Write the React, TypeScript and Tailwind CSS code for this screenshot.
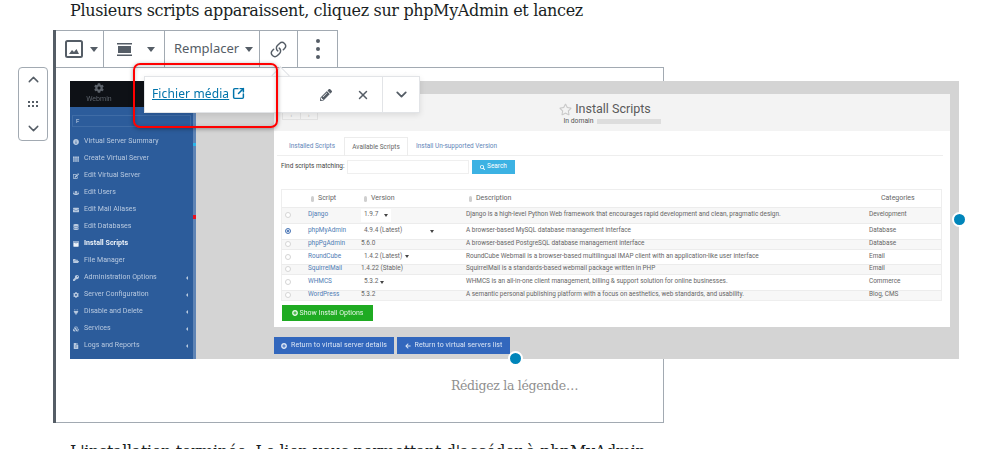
import { ChevronDown, ChevronUp, Link as LinkIcon, SquareArrowOutUpRight, X } from "lucide-react";
import {
  FaCog,
  FaDatabase,
  FaEdit,
  FaEnvelope,
  FaFileAlt,
  FaFolderOpen,
  FaInfoCircle,
  FaKey,
  FaPencilAlt,
  FaPlug,
  FaPlusCircle,
  FaRegStar,
  FaSearch,
  FaTh,
  FaUsers,
  FaArrowLeft,
  FaCubes,
  FaArchive,
} from "react-icons/fa";

const sidebarItems = [
  { label: "Virtual Server Summary", icon: FaInfoCircle },
  { label: "Create Virtual Server", icon: FaTh },
  { label: "Edit Virtual Server", icon: FaEdit },
  { label: "Edit Users", icon: FaUsers },
  { label: "Edit Mail Aliases", icon: FaEnvelope },
  { label: "Edit Databases", icon: FaDatabase },
  { label: "Install Scripts", icon: FaArchive, active: true },
  { label: "File Manager", icon: FaFolderOpen },
  { label: "Administration Options", icon: FaKey, more: true },
  { label: "Server Configuration", icon: FaCog, more: true },
  { label: "Disable and Delete", icon: FaPlug, more: true },
  { label: "Services", icon: FaCubes, more: true },
  { label: "Logs and Reports", icon: FaFileAlt, more: true },
];

const scripts = [
  { name: "Django", version: "1.9.7", selectW: "w-[30px]", desc: "Django is a high-level Python Web framework that encourages rapid development and clean, pragmatic design.", cat: "Development", h: "h-[16px]", odd: true },
  { name: "phpMyAdmin", version: "4.9.4 (Latest)", selectW: "w-[76px]", desc: "A browser-based MySQL database management interface", cat: "Database", h: "h-[16px]", checked: true },
  { name: "phpPgAdmin", version: "5.6.0", desc: "A browser-based PostgreSQL database management interface", cat: "Database", h: "h-[10px]", odd: true },
  { name: "RoundCube", version: "1.4.2 (Latest)", selectW: "w-[51px]", desc: "RoundCube Webmail is a browser-based multilingual IMAP client with an application-like user interface", cat: "Email", h: "h-[15px]" },
  { name: "SquirrelMail", version: "1.4.22 (Stable)", desc: "SquirrelMail is a standards-based webmail package written in PHP", cat: "Email", h: "h-[10px]", odd: true },
  { name: "WHMCS", version: "5.3.2", selectW: "w-[26px]", desc: "WHMCS is an all-in-one client management, billing & support solution for online businesses.", cat: "Commerce", h: "h-[16px]" },
  { name: "WordPress", version: "5.3.2", desc: "A semantic personal publishing platform with a focus on aesthetics, web standards, and usability.", cat: "Blog, CMS", h: "h-[10px]", odd: true },
];

function Caret() {
  return <span className="h-0 w-0 border-x-[4px] border-t-[5px] border-x-transparent border-t-[#555d66]" />;
}

function Handle({ className }: { className: string }) {
  return <span className={`absolute h-[15px] w-[15px] rounded-full border-2 border-white bg-[#0085ba] ${className}`} />;
}

function SortHead({ label, className }: { label: string; className: string }) {
  return (
    <div className={`flex items-center gap-[4px] ${className}`}>
      <span className="h-[6px] w-[3px] rounded-full bg-[#cfcfcf]" />
      <span>{label}</span>
    </div>
  );
}

function Sidebar() {
  return (
    <div className="relative flex w-[126px] shrink-0 flex-col border-r-[3px] border-[#5f84b5] bg-[#2c5c9b]">
      <div className="h-[26px] bg-[#0e1116]">
        <div className="flex w-[58px] flex-col items-center pt-[2px] text-[#5c626a]">
          <FaCog size={10} />
          <span className="mt-[3px] text-[7px] leading-none">Webmin</span>
        </div>
      </div>
      <div className="mx-[2px] mt-[8px] h-[12px] border border-[#3f6ca6] pl-[3px] text-[6px] leading-[10px] text-[#c9d6e8]">
        F
      </div>
      <div className="mt-[6px] flex flex-col">
        {sidebarItems.map((item) => {
          const Icon = item.icon;
          return (
            <div
              key={item.label}
              className={`flex h-[17px] items-center pl-[3px] pr-[5px] text-[7px] tracking-[0.05px] ${item.active ? "font-bold text-[#eef3f9]" : "text-[#b9cae0]"}`}
            >
              <Icon size={6} className="mr-[5px] w-[6px] shrink-0" />
              <span className="flex-1">{item.label}</span>
              {item.more && <span className="h-0 w-0 border-y-[2px] border-r-[2px] border-y-transparent border-r-[#b9cae0]" />}
            </div>
          );
        })}
      </div>
      <span className="absolute right-[-3px] top-[62px] h-[3px] w-[3px] bg-[#2bb4e8]" />
      <span className="absolute right-[-3px] top-[134px] h-[4px] w-[3px] bg-[#e8111f]" />
    </div>
  );
}

function ScriptsPanel() {
  return (
    <div className="flex h-[233px] w-[676px] flex-col bg-white text-[6.45px] text-[#555]">
      <div className="relative flex h-[37px] flex-col items-center justify-center bg-[#f3f3f3] pt-[2px]">
        <div className="absolute left-[8px] top-[17px] flex h-[9px] w-[36px] border border-[#e2e2e2] text-[5px] leading-[7px] text-[#aaa]">
          <span className="flex-1 border-r border-[#e2e2e2] text-center">‹</span>
          <span className="flex-1 text-center">›</span>
        </div>
        <div className="mr-[14px] flex items-center gap-[3px] text-[12.5px] leading-[16px] text-[#5a5a5a]">
          <FaRegStar size={13} className="text-[#c9c9c9]" />
          <span>Install Scripts</span>
        </div>
        <div className="flex items-center gap-[3px] text-[6.8px] leading-[9px]">
          <span>In domain</span>
          <span className="h-[5px] w-[64px] bg-[#dddddd]" />
        </div>
      </div>

      <div className="mx-[3px] mt-[6px] flex h-[19px] w-[666px] items-center border-b border-[#eeeeee] pl-[12px] text-[#5f86b8]">
        <span className="w-[55px] pt-[2px]">Installed Scripts</span>
        <span className="mr-[8px] flex h-[19px] w-[64px] items-center justify-center border border-b-0 border-[#ececec] pt-[2px] text-[#666]">Available Scripts</span>
        <span className="pt-[2px]">Install Un-supported Version</span>
      </div>

      <div className="ml-[7px] mt-[4px] flex h-[14px] items-center text-[#444]">
        <span className="w-[66px]">Find scripts matching:</span>
        <span className="h-[14px] w-[122px] border border-[#efefef]" />
        <span className="ml-[3px] flex h-[14px] w-[43px] items-center justify-center gap-[2px] bg-[#3cb2e3] text-white">
          <FaSearch size={5} /> Search
        </span>
      </div>

      <div className="ml-[7px] mt-[15px] w-[661px] border border-[#eeeeee] text-[#666]">
        <div className="flex h-[17px] items-center text-[7px]">
          <SortHead label="Script" className="ml-[29px] w-[53px]" />
          <SortHead label="Version" className="w-[105px]" />
          <SortHead label="Description" className="w-[412px]" />
          <span>Categories</span>
        </div>
        {scripts.map((row) => (
          <div
            key={row.name}
            className={`flex items-center border-t border-[#ececec] pb-[1px] ${row.h} ${row.odd ? "bg-[#f7f7f7]" : "bg-white"}`}
          >
            <span className="flex w-[26px] shrink-0 pl-[3px]">
              <span className={`flex h-[6px] w-[6px] items-center justify-center rounded-full border ${row.checked ? "border-[#4a76b5] bg-[#dfe8f5]" : "border-[#d5d5d5] bg-white"}`}>
                {row.checked && <span className="h-[2px] w-[2px] rounded-full bg-[#2f5fa8]" />}
              </span>
            </span>
            <span className="w-[53px] shrink-0 text-[#4f7cb4]">{row.name}</span>
            <span className="w-[105px] shrink-0">
              {row.selectW ? (
                <span className={`flex h-[13px] items-center justify-between bg-white pl-[3px] pr-[3px] ${row.selectW}`}>
                  {row.version}
                  <span className="h-0 w-0 border-x-[2px] border-t-[3px] border-x-transparent border-t-[#444]" />
                </span>
              ) : (
                row.version
              )}
            </span>
            <span className="w-[403px] shrink-0 whitespace-nowrap">{row.desc}</span>
            <span>{row.cat}</span>
          </div>
        ))}
      </div>

      <button className="ml-[8px] mt-[4px] flex h-[16px] w-[91px] items-center justify-center gap-[2px] bg-[#1fab22] text-[7px] text-[#e6f7e6]">
        <FaPlusCircle size={6} /> Show Install Options
      </button>
    </div>
  );
}

function WebminShot() {
  return (
    <div className="relative flex h-[278px] w-[889px] bg-[#d4d4d4]" style={{ fontFamily: "Roboto, sans-serif" }}>
      <div className="flex h-full w-full blur-[0.35px]">
        <Sidebar />
        <div className="flex flex-1 flex-col pl-[78px] pt-[13px]">
          <ScriptsPanel />
          <div className="mt-[10px] flex gap-[3px] text-[7px] tracking-[0.1px] text-[#dce6f5]">
            <span className="flex h-[17px] w-[120px] items-center justify-center gap-[4px] bg-[#3267bd]">
              <FaPlusCircle size={6} /> Return to virtual server details
            </span>
            <span className="flex h-[17px] w-[113px] items-center justify-center gap-[4px] bg-[#3267bd]">
              <FaArrowLeft size={6} /> Return to virtual servers list
            </span>
          </div>
        </div>
      </div>
      <Handle className="right-[-8px] top-[131px]" />
      <Handle className="bottom-[-7px] left-[438px]" />
    </div>
  );
}

function Toolbar() {
  return (
    <div className="flex h-[37px] w-fit border-t border-[#a2aab2] text-[#555d66]" style={{ fontFamily: '"Noto Sans", sans-serif' }}>
      <div className="flex w-[48px] items-center border-r border-[#a2aab2] pl-[9px]">
        <svg width="18" height="18" viewBox="0 0 18 18" fill="none">
          <rect x="1" y="1" width="16" height="16" rx="1.5" stroke="#555d66" strokeWidth="2" />
          <path d="M4 14l3-4 2 2 2.5-3L14 14z" fill="#555d66" />
        </svg>
        <span className="ml-[7px] flex"><Caret /></span>
      </div>
      <div className="flex w-[61px] items-center border-r border-[#a2aab2] pl-[13px]">
        <svg width="15" height="15" viewBox="0 0 15 15" fill="#555d66">
          <rect x="0" y="1" width="15" height="1.5" />
          <rect x="1" y="4" width="13" height="7" />
          <rect x="0" y="12.5" width="15" height="1.5" />
        </svg>
        <span className="ml-[15px] flex"><Caret /></span>
      </div>
      <div className="flex w-[95px] items-center border-r border-[#a2aab2] pl-[9px] text-[13px]">
        Remplacer
        <span className="ml-[6px] flex"><Caret /></span>
      </div>
      <div className="flex w-[38px] items-center justify-center border-r border-[#a2aab2]">
        <LinkIcon size={17} strokeWidth={2} className="-scale-x-100 rotate-90" />
      </div>
      <div className="flex w-[40px] flex-col items-center justify-center gap-[4px] border-r border-[#a2aab2]">
        <span className="h-[4px] w-[4px] rounded-full bg-[#555d66]" />
        <span className="h-[4px] w-[4px] rounded-full bg-[#555d66]" />
        <span className="h-[4px] w-[4px] rounded-full bg-[#555d66]" />
      </div>
    </div>
  );
}

function LinkPopover() {
  return (
    <>
      <span className="absolute left-[218px] top-[1px] z-10 h-[13px] w-[13px] rotate-45 border-l border-t border-[#e2e4e7] bg-white" />
      <div className="absolute left-[88px] top-[8px] z-10 flex h-[37px] w-[276px] items-center border border-[#e2e4e7] bg-white shadow-[0_2px_6px_rgba(0,0,0,0.1)]" style={{ fontFamily: '"Noto Sans", sans-serif' }}>
        <div className="flex flex-1 items-center pb-[2px] pl-[7px] text-[#0073aa]">
          <span className="text-[12px] tracking-[0.12px] underline">Fichier média</span>
          <SquareArrowOutUpRight size={13} strokeWidth={2.75} className="ml-[3px]" />
        </div>
        <FaPencilAlt size={12} className="mr-[24px] text-[#555d66]" />
        <X size={14} strokeWidth={2.5} className="mr-[12px] text-[#555d66]" />
        <span className="flex h-full w-[37px] items-center justify-center border-l border-[#e2e4e7] text-[#555d66]">
          <ChevronDown size={17} strokeWidth={2.5} />
        </span>
      </div>
      <div className="absolute left-[77px] top-[-5px] z-20 h-[65px] w-[145px] rounded-[7px] border-2 border-[#f00] shadow-[0_1px_4px_rgba(0,0,0,0.35),inset_0_1px_4px_rgba(0,0,0,0.2)]" />
    </>
  );
}

export default function App() {
  return (
    <div className="h-[449px] w-[988px] overflow-hidden bg-white" style={{ fontFamily: '"DejaVu Serif", serif' }}>
      <p className="h-[30px] pl-[70px] pt-[1px] text-[16px] leading-[20px] tracking-[-0.35px] text-[#191e23]">
        Plusieurs scripts apparaissent, cliquez sur phpMyAdmin et lancez
      </p>

      <div className="flex">
        <div className="ml-[18px] mt-[37px] flex h-[74px] w-[30px] flex-col items-center justify-between rounded-[4px] border border-[#a2aab2] py-[3px] text-[#555d66]">
          <ChevronUp size={17} strokeWidth={2} />
          <span className="grid grid-cols-3 gap-[2px]">
            {[0, 1, 2, 3, 4, 5].map((n) => (
              <span key={n} className="h-[2px] w-[2px] bg-[#555d66]" />
            ))}
          </span>
          <ChevronDown size={17} strokeWidth={2} />
        </div>

        <div className="ml-[5px] h-[393px] w-[611px] border-l-[3px] border-[#555d66]">
          <Toolbar />
          <div className="relative h-[356px] w-[608px] border-t border-r border-b border-[#a2aab2] pl-[14px] pt-[13px]">
            <WebminShot />
            <p className="w-[889px] pt-[17px] text-center text-[12.5px] leading-[20px] tracking-[-0.3px] text-[#8f8f8f]">Rédigez la légende…</p>
            <LinkPopover />
          </div>
        </div>
      </div>

      <p className="pl-[70px] pt-[19px] text-[16px] leading-[20px] tracking-[-0.35px] text-[#191e23]">
        L'installation terminée, Le lien vous permettant d'accéder à phpMyAdmin
      </p>
    </div>
  );
}
